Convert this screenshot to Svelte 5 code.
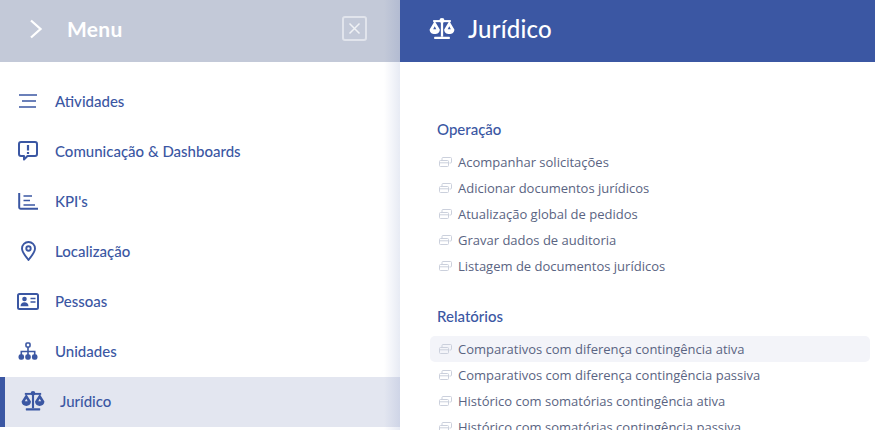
<script>
  const menu = [
    { id: 'list', label: 'Atividades' },
    { id: 'chat', label: 'Comunicação & Dashboards' },
    { id: 'kpi', label: "KPI's" },
    { id: 'pin', label: 'Localização' },
    { id: 'card', label: 'Pessoas' },
    { id: 'org', label: 'Unidades' },
    { id: 'scale', label: 'Jurídico', active: true }
  ];
  const sections = [
    { title: 'Operação', items: ['Acompanhar solicitações', 'Adicionar documentos jurídicos', 'Atualização global de pedidos', 'Gravar dados de auditoria', 'Listagem de documentos jurídicos'] },
    { title: 'Relatórios', items: ['Comparativos com diferença contingência ativa', 'Comparativos com diferença contingência passiva', 'Histórico com somatórias contingência ativa', 'Histórico com somatórias contingência passiva'] }
  ];
</script>

{#snippet scale(size)}
  <svg width={size} height={size * 0.84} viewBox="0 0 25 21" fill="currentColor">
    <circle cx="12.5" cy="2.4" r="2.4" />
    <rect x="4" y="2" width="17" height="2" />
    <rect x="11.400" y="3" width="2.200" height="15" />
    <rect x="5" y="18" width="15" height="2.400" rx=".5" />
    <path fill-rule="evenodd" d="M5.500 3 .6 11c0 2.800 2.200 4.500 4.900 4.500s4.900-1.700 4.900-4.500zM5.500 8 4 10.800h3z" />
    <path fill-rule="evenodd" d="M19.500 3 14.600 11c0 2.800 2.200 4.500 4.900 4.500s4.900-1.700 4.900-4.500zM19.500 8 18 10.800h3z" />
  </svg>
{/snippet}

{#snippet icon(id)}
  {#if id === 'list'}
    <svg width="19" height="14" viewBox="0 0 19 14" fill="none" stroke="currentColor" stroke-width="1.700"><path d="M0 1h18M3 7h14M0 13h17" /></svg>
  {:else if id === 'chat'}
    <svg width="20" height="20" viewBox="0 0 20 20" fill="none" stroke="currentColor" stroke-width="2"><path d="M3 1h14a2 2 0 0 1 2 2v10a2 2 0 0 1-2 2H9.500L6 18.500V15H3a2 2 0 0 1-2-2V3a2 2 0 0 1 2-2z" stroke-linejoin="round" /><path d="M10 4v5.500M10 11v2" stroke-width="2.200" /></svg>
  {:else if id === 'kpi'}
    <svg width="20" height="17" viewBox="0 0 20 17" fill="none" stroke="currentColor" stroke-width="1.500"><path d="M1.200 0v14.300a1.500 1.500 0 0 0 1.500 1.500H20" stroke-width="2" /><path d="M5.500 3h8.500M5.500 7.500h6.500M5.500 12h11.500" /></svg>
  {:else if id === 'pin'}
    <svg width="15" height="20" viewBox="0 0 15 20" fill="none" stroke="currentColor" stroke-width="1.900"><path d="M7.500 19C5 15.500 1 11.500 1 7.500a6.500 6.500 0 0 1 13 0c0 4-4 8-6.500 11.500z" stroke-linejoin="round" /><circle cx="7.500" cy="7.500" r="2.200" /></svg>
  {:else if id === 'card'}
    <svg width="22" height="17" viewBox="0 0 22 17" fill="none" stroke="currentColor"><rect x="1" y="1" width="20" height="15" rx="1.500" stroke-width="2" /><circle cx="7.500" cy="6" r="2.300" fill="currentColor" stroke="none" /><path d="M3.500 13.200c0-2.600 1.800-4 4-4s4 1.400 4 4z" fill="currentColor" stroke="none" /><path d="M13.500 5.500h5M13.500 9h5" stroke-width="1.600" /></svg>
  {:else if id === 'org'}
    <svg width="20" height="18" viewBox="0 0 20 18" fill="none" stroke="currentColor" stroke-width="1.600"><rect x="8" y="1" width="4" height="4" rx="1" /><path d="M10 5v8M3.300 13V9.500h13.400V13" /><rect x="1.300" y="13" width="4" height="4" rx="1.400" fill="currentColor" /><rect x="8" y="13" width="4" height="4" rx="1.400" fill="currentColor" /><rect x="14.700" y="13" width="4" height="4" rx="1.400" fill="currentColor" /></svg>
  {:else}
    {@render scale(24)}
  {/if}
{/snippet}

<div class="page">
  <aside class="left">
    <header class="left-head">
      <div class="brand">
        <svg width="14" height="20" viewBox="0 0 14 20" fill="none" stroke="#fff" stroke-width="2.300"><path d="M2 1.500 11.500 10 2 18.500" /></svg>
        <span class="menu-title">Menu</span>
      </div>
      <span class="close">
        <svg width="13" height="13" viewBox="0 0 13 13" fill="none" stroke="#fff" stroke-opacity=".75" stroke-width="1.500"><path d="M1.500 1.500l10 10M11.500 1.500l-10 10" /></svg>
      </span>
    </header>
    <nav class="menu">
      {#each menu as m}
        <div class="row" class:active={m.active}>
          <span class="ico">{@render icon(m.id)}</span>
          <span>{m.label}</span>
        </div>
      {/each}
    </nav>
  </aside>
  <main class="right">
    <header class="right-head">
      {@render scale(26)}
      <h1>Jurídico</h1>
    </header>
    <div class="content">
      {#each sections as s, si}
        <section>
          <h2>{s.title}</h2>
          <ul>
            {#each s.items as item, i}
              <li class:hover={si === 1 && i === 0}>
                <svg width="13" height="10" viewBox="0 0 13 10" fill="none" stroke="#CBD0DC" stroke-width="1"><rect x=".5" y="3.500" width="9" height="6" rx="1" /><path d="M.5 5.800h9M3 3.500V1.500a1 1 0 0 1 1-1h7.500a1 1 0 0 1 1 1V5a1 1 0 0 1-1 1h-1" /></svg>
                <span>{item}</span>
              </li>
            {/each}
          </ul>
        </section>
      {/each}
    </div>
  </main>
</div>

<style>
  :global(body) { margin: 0; background: #fff; overflow: hidden; }
  .page { display: flex; width: 875px; height: 430px; overflow: hidden; font-family: "Open Sans", sans-serif; }
  .left { width: 400px; flex: none; position: relative; }
  .left::after { content: ""; position: absolute; top: 0; right: 0; bottom: 0; width: 16px; background: linear-gradient(to right, rgba(59, 87, 163, 0), rgba(59, 87, 163, .12)); pointer-events: none; }
  .left-head { height: 62px; background: #C3C9D8; display: flex; align-items: center; justify-content: space-between; padding: 0 33px 0 29px; box-sizing: border-box; }
  .brand { display: flex; align-items: center; gap: 24px; padding-bottom: 5px; }
  .menu-title { color: #fff; font: 700 21px Lato, sans-serif; letter-spacing: .3px; }
  .close { width: 25px; height: 25px; margin-bottom: 5px; box-sizing: border-box; border: 2px solid rgba(255, 255, 255, .5); border-radius: 3px; display: flex; align-items: center; justify-content: center; }
  .menu { padding-top: 15px; }
  .row { height: 50px; box-sizing: border-box; padding: 0 0 2px 17px; display: flex; align-items: center; gap: 16px; color: #3B57A3; font: 500 15px Lato, sans-serif; }
  .ico { width: 22px; display: flex; justify-content: center; align-items: center; }
  .row.active { background: #E3E6F0; border-left: 5px solid #3B57A3; padding-left: 15px; gap: 15px; }
  .row.active .ico { width: 25px; }
  .right { flex: 1; min-width: 0; }
  .right-head { height: 62px; box-sizing: border-box; padding: 0 0 5px 29px; background: #3B57A3; color: #fff; display: flex; align-items: center; gap: 13px; }
  h1 { margin: 0; font: 500 24px Lato, sans-serif; letter-spacing: .2px; }
  .content { padding: 57px 5px 0 30px; }
  section { margin-bottom: 27px; }
  h2 { margin: 0 0 10px 7px; font: 500 15px/20px Lato, sans-serif; color: #3B57A3; }
  ul { list-style: none; margin: 0; padding: 0; }
  li { height: 26px; display: flex; align-items: center; gap: 6px; padding-left: 9px; font-size: 13px; color: #5A6482; border-radius: 5px; }
  li.hover { background: #F3F4F9; }
</style>
